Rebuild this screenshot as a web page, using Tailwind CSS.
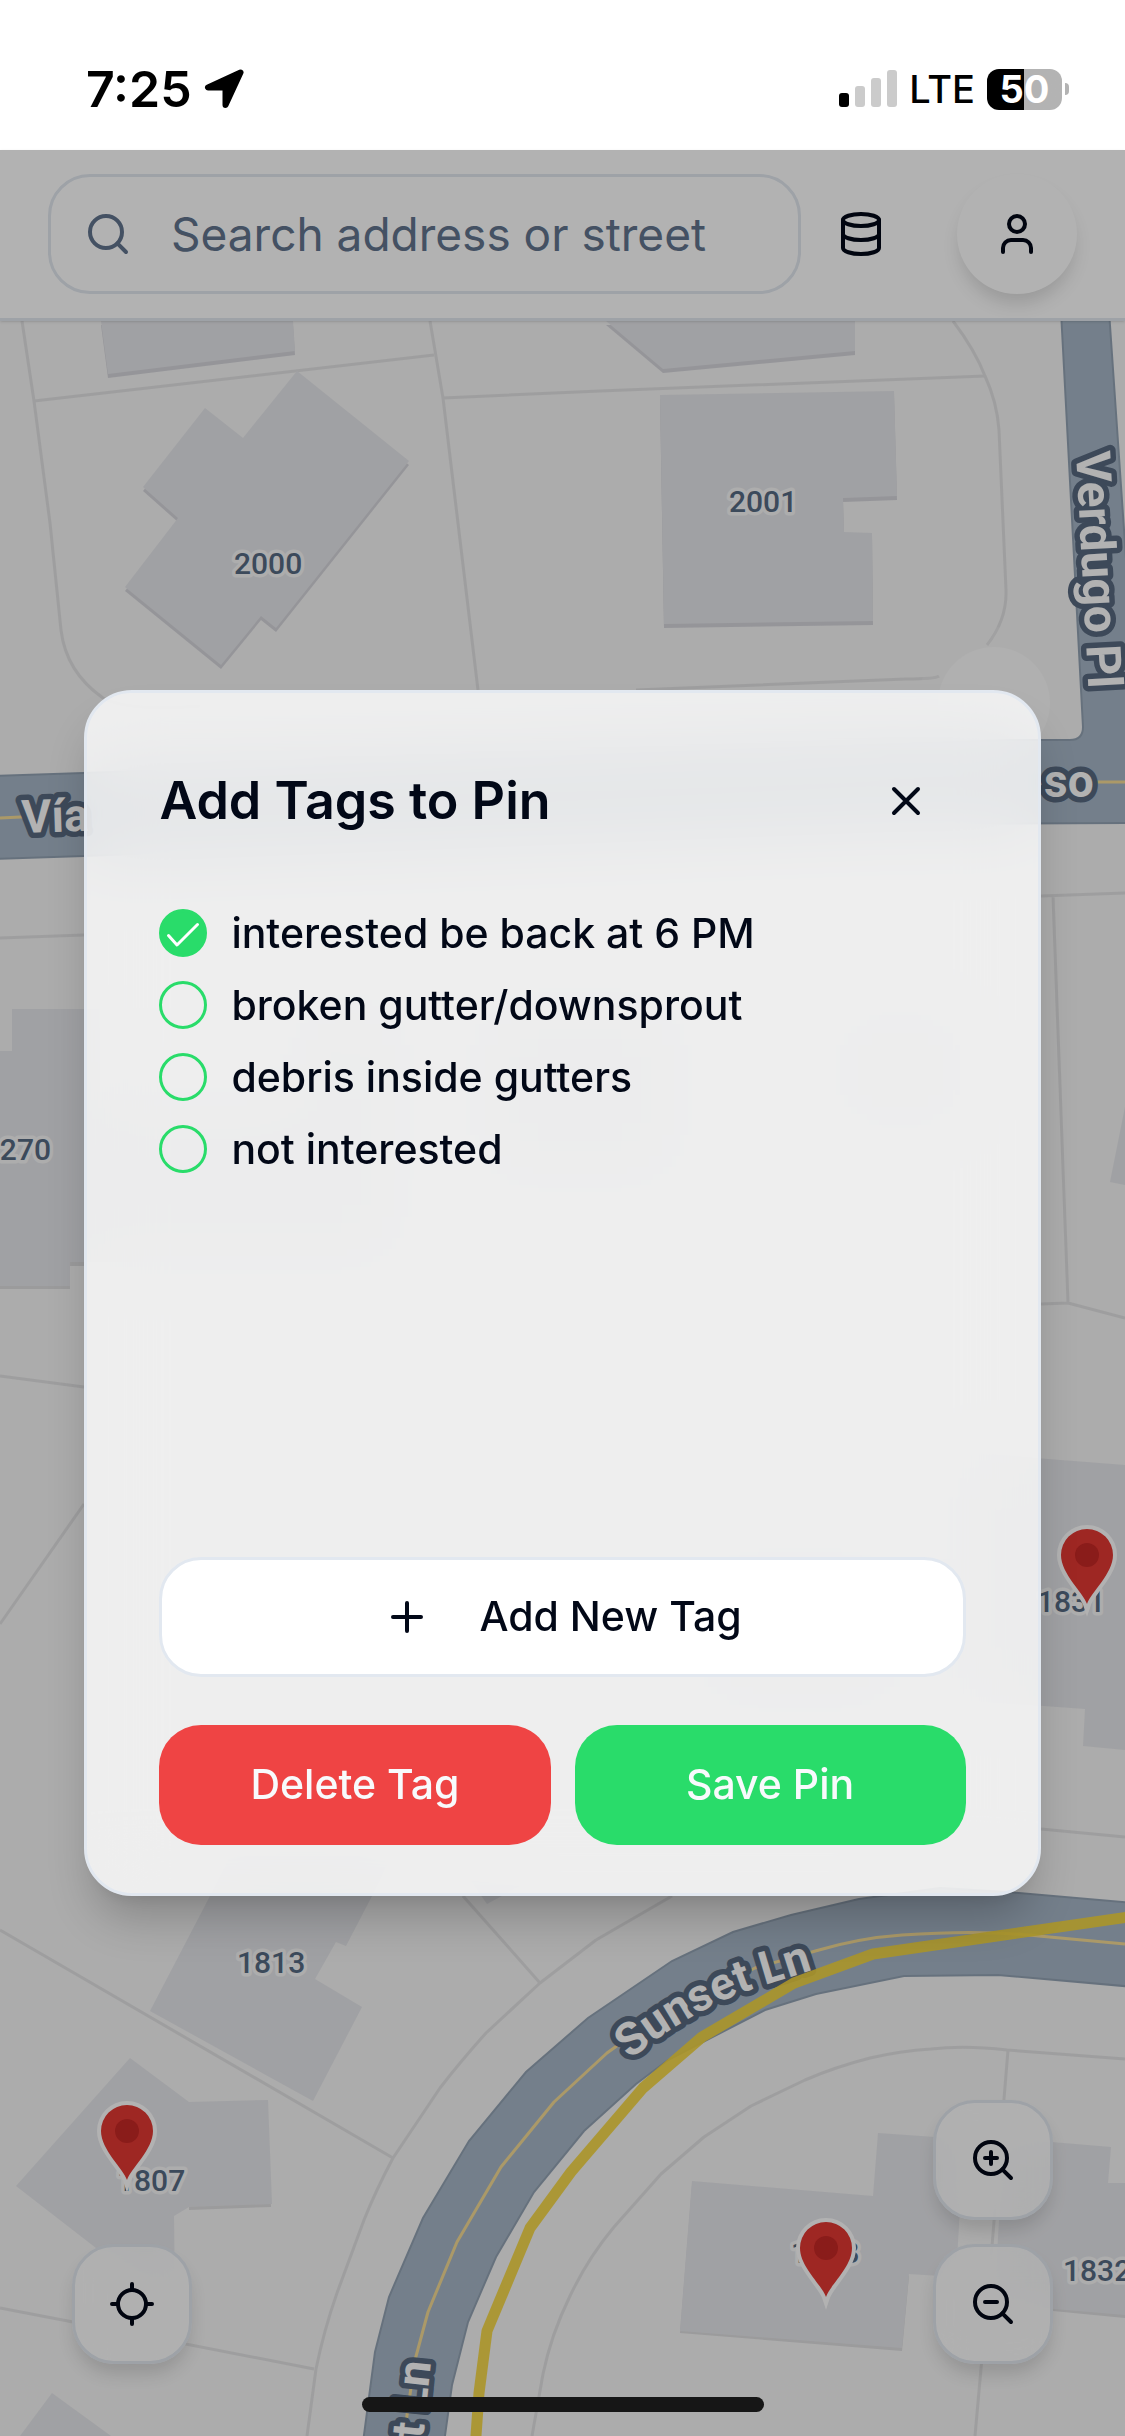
<!DOCTYPE html>
<html lang="en">
<head>
<meta charset="utf-8">
<meta name="viewport" content="width=device-width, initial-scale=1">
<title>Add Tags to Pin</title>
<script src="https://cdn.jsdelivr.net/npm/@tailwindcss/browser@4"></script>
</head>
<body class="flex min-h-screen flex-col bg-white font-['Inter','Liberation_Sans',sans-serif] text-[#020817]">

<!-- Phone status bar -->
<div class="flex h-[150px] shrink-0 items-center justify-between pt-7 pr-14 pl-[86px] text-black">
  <div class="flex items-center gap-3">
    <span class="text-[50px] leading-none font-semibold">7:25</span>
    <svg class="size-10" viewBox="0 0 40 40" fill="currentColor" stroke="currentColor" stroke-width="6" stroke-linejoin="round" aria-hidden="true"><path d="M36.500 3.500L4 18.500h17.500V36z"/></svg>
  </div>
  <div class="flex items-center gap-3">
    <svg class="h-[38px] w-[58px]" viewBox="0 0 58 38" aria-hidden="true">
      <rect x="0" y="23" width="10" height="14" rx="3"/>
      <g fill="#cbcbcb"><rect x="16" y="16" width="10" height="21" rx="3"/><rect x="32" y="8" width="10" height="29" rx="3"/><rect x="48" y="0" width="10" height="37" rx="3"/></g>
    </svg>
    <span class="text-[38px] leading-none font-medium">LTE</span>
    <div class="flex items-center gap-[3px]">
      <span class="flex h-[41px] w-[75px] items-center justify-center rounded-[12px] bg-linear-to-r from-black from-50% to-[#b3b3b3] to-50% text-[38px] leading-none font-bold text-white">50</span>
      <span class="h-3 w-1 rounded-r-full bg-[#b3b3b3]"></span>
    </div>
  </div>
</div>

<main class="relative flex flex-1 flex-col">

  <header class="relative z-10 flex items-center border-b-3 border-slate-200 bg-white px-12 py-6 shadow-sm">
    <label class="flex h-[120px] min-w-0 flex-1 items-center gap-[39px] rounded-[42px] border-3 border-slate-200 px-[33px] text-slate-500">
      <svg class="size-12 shrink-0" viewBox="0 0 24 24" fill="none" stroke="currentColor" stroke-width="2" stroke-linecap="round" stroke-linejoin="round" aria-hidden="true"><circle cx="11" cy="11" r="8"/><path d="m21 21-4.300-4.300"/></svg>
      <input type="search" aria-label="Search" placeholder="Search address or street" class="min-w-0 flex-1 bg-transparent text-[46px] outline-none placeholder:text-slate-500">
    </label>
    <button type="button" aria-label="Saved data" class="flex size-30 items-center justify-center">
      <svg class="size-12" viewBox="0 0 24 24" fill="none" stroke="currentColor" stroke-width="2" stroke-linecap="round" stroke-linejoin="round"><ellipse cx="12" cy="5" rx="9" ry="3"/><path d="M3 5V19A9 3 0 0 0 21 19V5"/><path d="M3 12A9 3 0 0 0 21 12"/></svg>
    </button>
    <button type="button" aria-label="Account" class="ml-9 flex size-30 items-center justify-center rounded-full bg-white shadow-[0_12px_18px_-3px_rgb(0_0_0/0.14)]">
      <svg class="size-12" viewBox="0 0 24 24" fill="none" stroke="currentColor" stroke-width="2" stroke-linecap="round" stroke-linejoin="round"><path d="M19 21v-2a4 4 0 0 0-4-4H9a4 4 0 0 0-4 4v2"/><circle cx="12" cy="7" r="4"/></svg>
    </button>
  </header>

  <!-- Map -->
  <section aria-label="Map" class="relative flex-1 overflow-hidden bg-[#f6f6f6]">
    <svg class="absolute inset-0 size-full" viewBox="0 321 1125 2115" preserveAspectRatio="xMidYMid slice" fill="none">
      <defs>
        <path id="sunset" d="M630 2060Q692 2008 764 1985Q796 1976 860 1954"/>
        <g id="pin">
          <path d="M0 0C-4-12-26-30-26-49A26 26 0 0 1 26-49C26-30 4-12 0 0Z" fill="#e33833" stroke="#fff" stroke-width="8" paint-order="stroke"/>
          <circle cy="-49" r="12" fill="#c62926"/>
        </g>
      </defs>

      <!-- Parcel lines -->
      <g stroke="#e3e3e4" stroke-width="3" stroke-linejoin="round">
        <path d="M22 321L34 401L50 523L61 630Q66 672 103 698Q130 712 200 706"/>
        <path d="M34 401L434 355M430 321L443 398L478 690M443 398L600 391L985 376"/>
        <path d="M953 321Q975 350 985 376Q997 402 999 430L1006 590Q1007 620 987 645M939 676Q935 679 906 679L636 690"/>
        <path d="M0 938L84 935M0 1376L84 1387M84 1504L0 1624"/>
        <path d="M1041 896L1125 893M1053 896L1068 1303M1041 1304L1068 1303L1125 1318M1041 1829L1125 1837"/>
        <path d="M0 1930L393 2158M0 2308L73 2322L314 2369M463 1896L540 1983"/>
        <path d="M672 1896L596 1940L540 1983L486 2033Q460 2062 440 2088L393 2158Q376 2190 364 2220L337 2293Q324 2330 316 2369L307 2436"/>
        <path d="M1125 2059L1007 2050Q965 2045 931 2049Q900 2051 870 2058Q835 2067 805 2080L751 2106L704 2137L661 2174L614 2227Q588 2258 570 2296Q551 2335 543 2374L532 2436"/>
        <path d="M1008 2050L992 2246L975 2436"/>
      </g>

      <!-- Buildings: dark lower edge, then roof -->
      <g fill="#d6d6dc" transform="translate(0 4)">
        <path d="M101 321L108 374L295 351L293 321zM297 371L409 461L276 628L261 616L221 665L125 587L178 518L143 487L205 408L243 438z"/>
        <path d="M606 321L663 369L855 351V321zM660 395L894 391L897 496L843 498L844 532L872 533L873 621L664 624z"/>
      </g>
      <g fill="#dedee0" transform="translate(0 4)">
        <path d="M84 1009H12V1051H0V1285H70V1262H84z"/>
        <path d="M680 2329L692 2181L909 2272L902 2347zM1053 2307L1125 2314V2280H1053zM189 2206L271 2203L269 2150H189z"/>
      </g>
      <g fill="#e6e7eb">
        <path d="M101 321L108 374L295 351L293 321zM297 371L409 461L276 628L261 616L221 665L125 587L178 518L143 487L205 408L243 438z"/>
        <path d="M606 321L663 369L855 351V321zM660 395L894 391L897 496L843 498L844 532L872 533L873 621L664 624z"/>
        <path d="M100 1009H12V1051H0V1286H70V1262H400V1000H300V1100H100zM480 1000H680V1180H480zM840 1020H960V1120H840z"/>
        <path d="M1125 1107L1110 1182L1125 1185zM700 1560H900V1700H700zM960 1452L1125 1465V1750L1083 1746L1085 1709L960 1700z"/>
        <path d="M230 1856L210 1896L150 2011L313 2101L362 2007L315 1979L336 1942L346 1946L372 1896L392 1856zM470 1880L487 1904L520 1886z"/>
        <path d="M130 2058L189 2102L268 2100L272 2204L189 2207L174 2216L175 2300L96 2248L16 2186zM52 2393L111 2436H20z"/>
        <path d="M692 2181L873 2196L878 2133L964 2139L956 2277L909 2274L902 2348L680 2331zM1004 2138L1111 2147L1108 2183H1125V2315L994 2304z"/>
      </g>

      <circle cx="994" cy="703" r="76" fill="#fff" fill-opacity="0.150"/>
      <circle cx="994" cy="703" r="56" fill="#fcfcfc"/>

      <!-- Roads -->
      <g fill="#a7b7c7" stroke="#93a3b4" stroke-width="2">
        <path d="M1061 311L1083 727Q1083 740 1070 740H1010L84 773L-5 776V859L84 856L900 824L1135 823V690L1109 311z"/>
        <path d="M362 2450L375 2352L389 2297L423 2218L469 2141L526 2072L588 2018L672 1961L733 1932L791 1915L859 1899L940 1888L1007 1892L1135 1903V1987L998 1975L904 1976L816 1994L765 2010L668 2060L636 2084L584 2131L534 2192L496 2257L468 2322L452 2385L443 2450z"/>
      </g>
      <g stroke="#f5dc96" stroke-width="3" stroke-linejoin="round">
        <path d="M0 818L84 814M1040 782H1125"/>
        <path d="M404 2436L415 2360L428 2312L457 2242L501 2167L554 2102L607 2053L660 2015L755 1968L819 1950Q860 1938 902 1935Q975 1930 1028 1935L1125 1944"/>
      </g>

      <!-- House numbers -->
      <g class="font-['Roboto',sans-serif] text-[30px] font-medium" fill="#566a83" stroke="#f8f8f8" stroke-width="7" stroke-linejoin="round" paint-order="stroke">
        <text x="234" y="574">2000</text>
        <text x="729" y="512">2001</text>
        <text x="51" y="1160" text-anchor="end">1270</text>
        <text x="1037" y="1612">1831</text>
        <text x="237" y="1973">1813</text>
        <text x="117" y="2191">1807</text>
        <text x="791" y="2263">1828</text>
        <text x="1063" y="2281">1832</text>
      </g>

      <!-- Street names -->
      <g class="font-['Roboto',sans-serif] text-[48px] font-bold" fill="#fff" stroke="#586980" stroke-width="11" stroke-linejoin="round" paint-order="stroke">
        <text transform="translate(1076 452) rotate(87)">Verdugo Pl</text>
        <text transform="translate(22 833) rotate(-2)" class="text-[46px]">Vía</text>
        <text x="1044" y="797" class="text-[46px]">so</text>
        <text class="text-[46px]"><textPath href="#sunset">Sunset Ln</textPath></text>
        <text transform="translate(431 2362) rotate(-84)" text-anchor="end" class="text-[46px]">Sunset Ln</text>
      </g>

      <!-- Route -->
      <path d="M475 2450L479 2393L487 2331L530 2228L571 2172L643 2088L702 2037L794 1983L873 1954L1135 1916" stroke="#f5d63c" stroke-opacity="0.900" stroke-width="11" stroke-linejoin="round"/>

      <use href="#pin" x="127" y="2180"/>
      <use href="#pin" x="826" y="2297"/>
      <use href="#pin" x="1087" y="1604"/>
    </svg>

    <button type="button" aria-label="Locate me" class="absolute bottom-18 left-18 flex size-30 items-center justify-center rounded-[42px] border-3 border-slate-200 bg-white/80 shadow-[0_12px_18px_-3px_rgb(0_0_0/0.14)] backdrop-blur-lg">
      <svg class="size-12" viewBox="0 0 24 24" fill="none" stroke="currentColor" stroke-width="2" stroke-linecap="round"><path d="M2 12h3M19 12h3M12 2v3M12 19v3"/><circle cx="12" cy="12" r="7"/></svg>
    </button>
    <div class="absolute right-18 bottom-18 flex flex-col gap-6">
      <button type="button" aria-label="Zoom in" class="flex size-30 items-center justify-center rounded-[42px] border-3 border-slate-200 bg-white/80 shadow-[0_12px_18px_-3px_rgb(0_0_0/0.14)] backdrop-blur-lg">
        <svg class="size-12" viewBox="0 0 24 24" fill="none" stroke="currentColor" stroke-width="2" stroke-linecap="round"><circle cx="11" cy="11" r="8"/><path d="M21 21l-4.350-4.350M11 8v6M8 11h6"/></svg>
      </button>
      <button type="button" aria-label="Zoom out" class="flex size-30 items-center justify-center rounded-[42px] border-3 border-slate-200 bg-white/80 shadow-[0_12px_18px_-3px_rgb(0_0_0/0.14)] backdrop-blur-lg">
        <svg class="size-12" viewBox="0 0 24 24" fill="none" stroke="currentColor" stroke-width="2" stroke-linecap="round"><circle cx="11" cy="11" r="8"/><path d="M21 21l-4.350-4.350M8 11h6"/></svg>
      </button>
    </div>
  </section>

  <!-- Dialog over a dimmed page -->
  <div class="absolute inset-0 z-20 flex items-center justify-center bg-black/30">
    <div role="dialog" aria-modal="true" aria-labelledby="dialog-title" class="flex w-[85%] flex-col gap-12 rounded-[48px] border-3 border-slate-200 bg-white/80 px-18 py-12 shadow-[0_30px_45px_-9px_rgb(0_0_0/0.22),0_12px_18px_-12px_rgb(0_0_0/0.1)] backdrop-blur-[36px]">
      <div class="flex items-center justify-between">
        <h1 id="dialog-title" class="text-[52px] font-semibold">Add Tags to Pin</h1>
        <button type="button" aria-label="Close" class="flex size-30 items-center justify-center">
          <svg class="size-12" viewBox="0 0 24 24" fill="none" stroke="currentColor" stroke-width="2" stroke-linecap="round"><path d="M18 6 6 18M6 6l12 12"/></svg>
        </button>
      </div>

      <div class="flex h-[600px] flex-col gap-6 overflow-y-auto text-[41px] leading-12 font-medium">
        <label class="flex items-center gap-6">
          <span class="grid size-12 shrink-0">
            <input type="checkbox" checked class="peer col-start-1 row-start-1 size-12 appearance-none rounded-full border-3 border-[#29dc6a] checked:bg-[#29dc6a]">
            <svg class="pointer-events-none invisible col-start-1 row-start-1 size-12 peer-checked:visible" viewBox="0 0 48 48" fill="none" stroke="#fff" stroke-width="3" stroke-linecap="round" stroke-linejoin="round" aria-hidden="true"><path d="M9.500 26.500l8.500 9.500 20.500-20.500"/></svg>
          </span>
          interested be back at 6 PM
        </label>
        <label class="flex items-center gap-6">
          <input type="checkbox" class="size-12 shrink-0 appearance-none rounded-full border-3 border-[#29dc6a] checked:bg-[#29dc6a]">
          broken gutter/downsprout
        </label>
        <label class="flex items-center gap-6">
          <input type="checkbox" class="size-12 shrink-0 appearance-none rounded-full border-3 border-[#29dc6a] checked:bg-[#29dc6a]">
          debris inside gutters
        </label>
        <label class="flex items-center gap-6">
          <input type="checkbox" class="size-12 shrink-0 appearance-none rounded-full border-3 border-[#29dc6a] checked:bg-[#29dc6a]">
          not interested
        </label>
      </div>

      <button type="button" class="flex h-30 items-center justify-center gap-12 rounded-[42px] border-3 border-slate-200 bg-white text-[41px] font-medium">
        <svg class="size-12" viewBox="0 0 24 24" fill="none" stroke="currentColor" stroke-width="2" stroke-linecap="round" aria-hidden="true"><path d="M5 12h14M12 5v14"/></svg>
        Add New Tag
      </button>

      <div class="flex gap-6 text-[41px] font-medium text-slate-50">
        <button type="button" class="h-30 flex-1 rounded-[42px] bg-[#ef4444]">Delete Tag</button>
        <button type="button" class="h-30 flex-1 rounded-[42px] bg-[#29dc6a]">Save Pin</button>
      </div>
    </div>
  </div>

  <!-- Home indicator -->
  <div class="absolute inset-x-0 bottom-6 z-30 flex justify-center"><span class="h-[15px] w-[402px] rounded-full bg-[#161616]"></span></div>
</main>
</body>
</html>
